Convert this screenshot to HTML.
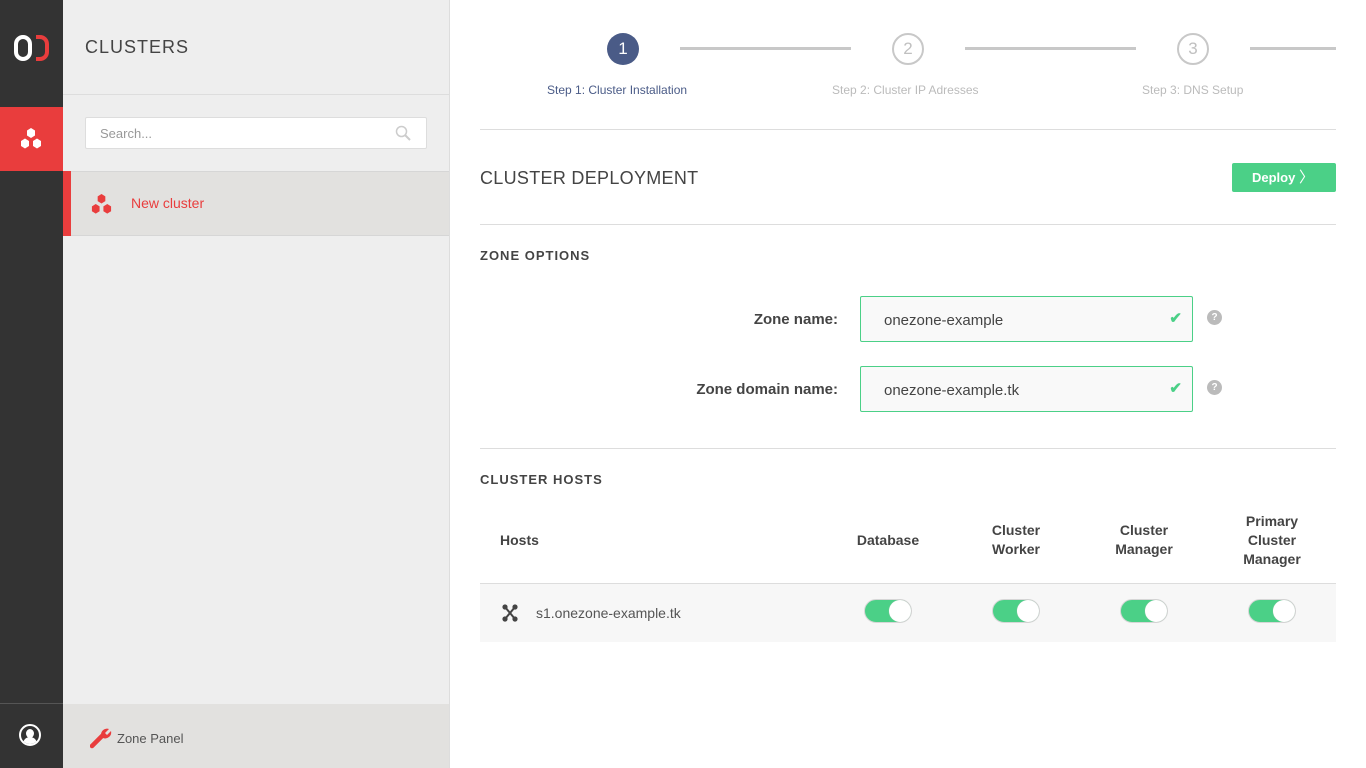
<!DOCTYPE html>
<html><head><meta charset="utf-8"><style>
*{box-sizing:border-box;margin:0;padding:0}
body{width:1366px;height:768px;overflow:hidden;font-family:"Liberation Sans",sans-serif;background:#fff;position:relative;color:#555}
.abs{position:absolute}
#side{left:0;top:0;width:63px;height:768px;background:#333}
#panel{left:63px;top:0;width:387px;height:768px;background:#eee;border-right:1px solid #ddd}
.hr{position:absolute;height:1px;background:#ddd}
.th{position:absolute;font-size:14px;font-weight:bold;color:#444;text-align:center;line-height:19px}
.tog{position:absolute;width:48px;height:24px;border-radius:12px;background:#4bd087;border:1px solid #d6d6d6}
.tog::after{content:"";position:absolute;right:0;top:0;width:22px;height:22px;border-radius:50%;background:#fff;box-shadow:0 0 1px #bbb}
.inp{position:absolute;left:860px;width:333px;height:46px;border:1px solid #4bd087;border-radius:2px;background:#f9f9f9;font-size:15px;color:#444;padding:15px 0 0 23px}
.lbl{position:absolute;right:528px;font-size:15px;font-weight:bold;color:#444}
.q{position:absolute;left:1207px;width:15px;height:15px;border-radius:50%;background:#bbb;color:#fff;font-size:10px;text-align:center;line-height:15px;font-weight:bold}
</style></head><body>
<div id="side" class="abs">
 <div class="abs" style="left:14px;top:35px;width:18px;height:26px;border:4px solid #fff;border-radius:9px"></div>
 <div class="abs" style="left:36px;top:35px;width:13px;height:26px;border:4px solid #e93d3d;border-left:none;border-radius:0 9px 9px 0"></div>
 <div class="abs" style="left:0;top:107px;width:63px;height:64px;background:#e93d3d">
  <svg class="abs" style="left:19px;top:20px" width="24" height="24" viewBox="0 0 24 24"><g fill="#fff"><polygon points="12,1 16,3.5 16,8.5 12,11 8,8.5 8,3.5"/><polygon points="6,11.5 10,14 10,19 6,21.5 2,19 2,14"/><polygon points="18,11.5 22,14 22,19 18,21.5 14,19 14,14"/></g></svg>
 </div>
 <div class="abs" style="left:0;top:703px;width:63px;height:1px;background:#555"></div>
 <div class="abs" style="left:19px;top:724px;width:22px;height:22px;border-radius:50%;border:2px solid #fff;overflow:hidden;background:#333"><div class="abs" style="left:5px;top:3px;width:8px;height:9px;border-radius:50%;background:#fff"></div><div class="abs" style="left:2px;top:11px;width:14px;height:10px;border-radius:7px 7px 0 0;background:#fff"></div></div>
</div>
<div id="panel" class="abs">
 <div class="abs" style="left:22px;top:37px;font-size:18px;letter-spacing:1px;color:#444">CLUSTERS</div>
 <div class="hr" style="left:0;top:94px;width:386px"></div>
 <div class="abs" style="left:22px;top:117px;width:342px;height:32px;background:#fff;border:1px solid #ddd;border-radius:2px;font-size:13px;color:#999;padding:8px 0 0 14px">Search...
  <svg class="abs" style="right:15px;top:7px" width="16" height="16" viewBox="0 0 16 16"><circle cx="6.5" cy="6.5" r="5" fill="none" stroke="#ccc" stroke-width="1.5"/><line x1="10" y1="10" x2="15" y2="15" stroke="#ccc" stroke-width="2"/></svg></div>
 <div class="abs" style="left:0;top:171px;width:386px;height:65px;background:#e2e1df;border-top:1px solid #d6d6d6;border-bottom:1px solid #d6d6d6">
  <div class="abs" style="left:0;top:-1px;width:8px;height:65px;background:#e93d3d"></div>
  <svg class="abs" style="left:27px;top:21px" width="23" height="23" viewBox="0 0 24 24"><g fill="#e93d3d"><polygon points="12,1 16,3.5 16,8.5 12,11 8,8.5 8,3.5"/><polygon points="6,11.5 10,14 10,19 6,21.5 2,19 2,14"/><polygon points="18,11.5 22,14 22,19 18,21.5 14,19 14,14"/></g></svg>
  <div class="abs" style="left:68px;top:23px;font-size:14px;color:#e93d3d">New cluster</div>
 </div>
 <div class="abs" style="left:0;top:704px;width:386px;height:64px;background:#e2e1df">
  <svg class="abs" style="left:27px;top:23px" width="22" height="22" viewBox="0 0 22 22"><path d="M2 19 L12 9" stroke="#e93d3d" stroke-width="4.5" stroke-linecap="round"/><path d="M11 8 A6 6 0 0 1 19 2 L15 6 L17 8 L21 4 A6 6 0 0 1 13 11 Z" fill="#e93d3d"/></svg>
  <div class="abs" style="left:54px;top:27px;font-size:13px;color:#555">Zone Panel</div>
 </div>
</div>
<div class="abs" style="left:607px;top:33px;width:32px;height:32px;border-radius:50%;background:#4a5b87;color:#fff;font-size:17px;text-align:center;line-height:32px">1</div>
<div class="abs" style="left:892px;top:33px;width:32px;height:32px;border-radius:50%;border:2px solid #c8c8c8;color:#c0c0c0;font-size:17px;text-align:center;line-height:28px">2</div>
<div class="abs" style="left:1177px;top:33px;width:32px;height:32px;border-radius:50%;border:2px solid #c8c8c8;color:#c0c0c0;font-size:17px;text-align:center;line-height:28px">3</div>
<div class="abs" style="left:680px;top:47px;width:171px;height:3px;background:#c8c8c8"></div>
<div class="abs" style="left:965px;top:47px;width:171px;height:3px;background:#c8c8c8"></div>
<div class="abs" style="left:1250px;top:47px;width:86px;height:3px;background:#c8c8c8"></div>
<div class="abs" style="left:547px;top:83px;font-size:12px;color:#4a5b87">Step 1: Cluster Installation</div>
<div class="abs" style="left:832px;top:83px;font-size:12px;color:#bbb">Step 2: Cluster IP Adresses</div>
<div class="abs" style="left:1142px;top:83px;font-size:12px;color:#bbb">Step 3: DNS Setup</div>
<div class="hr" style="left:480px;top:129px;width:856px"></div>
<div class="abs" style="left:480px;top:168px;font-size:18px;letter-spacing:0.3px;color:#444">CLUSTER DEPLOYMENT</div>
<div class="abs" style="left:1232px;top:163px;width:104px;height:29px;background:#4bd087;border-radius:2px;color:#fff;font-size:13px;font-weight:bold;line-height:29px;padding-left:20px;white-space:nowrap">Deploy <span style="font-weight:normal;font-size:15px">〉</span></div>
<div class="hr" style="left:480px;top:224px;width:856px"></div>
<div class="abs" style="left:480px;top:248px;font-size:13px;font-weight:bold;letter-spacing:1px;color:#444">ZONE OPTIONS</div>
<div class="lbl" style="top:311px">Zone name:</div>
<div class="inp" style="top:296px">onezone-example<span class="abs" style="right:10px;top:12px;color:#4bd087;font-weight:bold">✔</span></div>
<div class="q" style="top:310px">?</div>
<div class="lbl" style="top:381px">Zone domain name:</div>
<div class="inp" style="top:366px">onezone-example.tk<span class="abs" style="right:10px;top:12px;color:#4bd087;font-weight:bold">✔</span></div>
<div class="q" style="top:380px">?</div>
<div class="hr" style="left:480px;top:448px;width:856px"></div>
<div class="abs" style="left:480px;top:472px;font-size:13px;font-weight:bold;letter-spacing:1px;color:#444">CLUSTER HOSTS</div>
<div class="th" style="left:500px;top:531px;text-align:left">Hosts</div>
<div class="th" style="left:838px;width:100px;top:531px">Database</div>
<div class="th" style="left:966px;width:100px;top:521px">Cluster<br>Worker</div>
<div class="th" style="left:1094px;width:100px;top:521px">Cluster<br>Manager</div>
<div class="th" style="left:1222px;width:100px;top:512px">Primary<br>Cluster<br>Manager</div>
<div class="abs" style="left:480px;top:583px;width:856px;height:59px;background:#f7f7f7;border-top:1px solid #ddd"></div>
<svg class="abs" style="left:502px;top:604px" width="16" height="18" viewBox="0 0 16 18"><g stroke="#444" stroke-width="2" fill="none"><path d="M3 3 Q8 9 13 15 M13 3 Q8 9 3 15"/></g><g fill="#444"><circle cx="3" cy="3" r="2.6"/><circle cx="13" cy="3" r="2.6"/><circle cx="3" cy="15" r="2.6"/><circle cx="13" cy="15" r="2.6"/></g></svg>
<div class="abs" style="left:536px;top:605px;font-size:14px;color:#555">s1.onezone-example.tk</div>
<div class="tog" style="left:864px;top:599px"></div>
<div class="tog" style="left:992px;top:599px"></div>
<div class="tog" style="left:1120px;top:599px"></div>
<div class="tog" style="left:1248px;top:599px"></div>
</body></html>
